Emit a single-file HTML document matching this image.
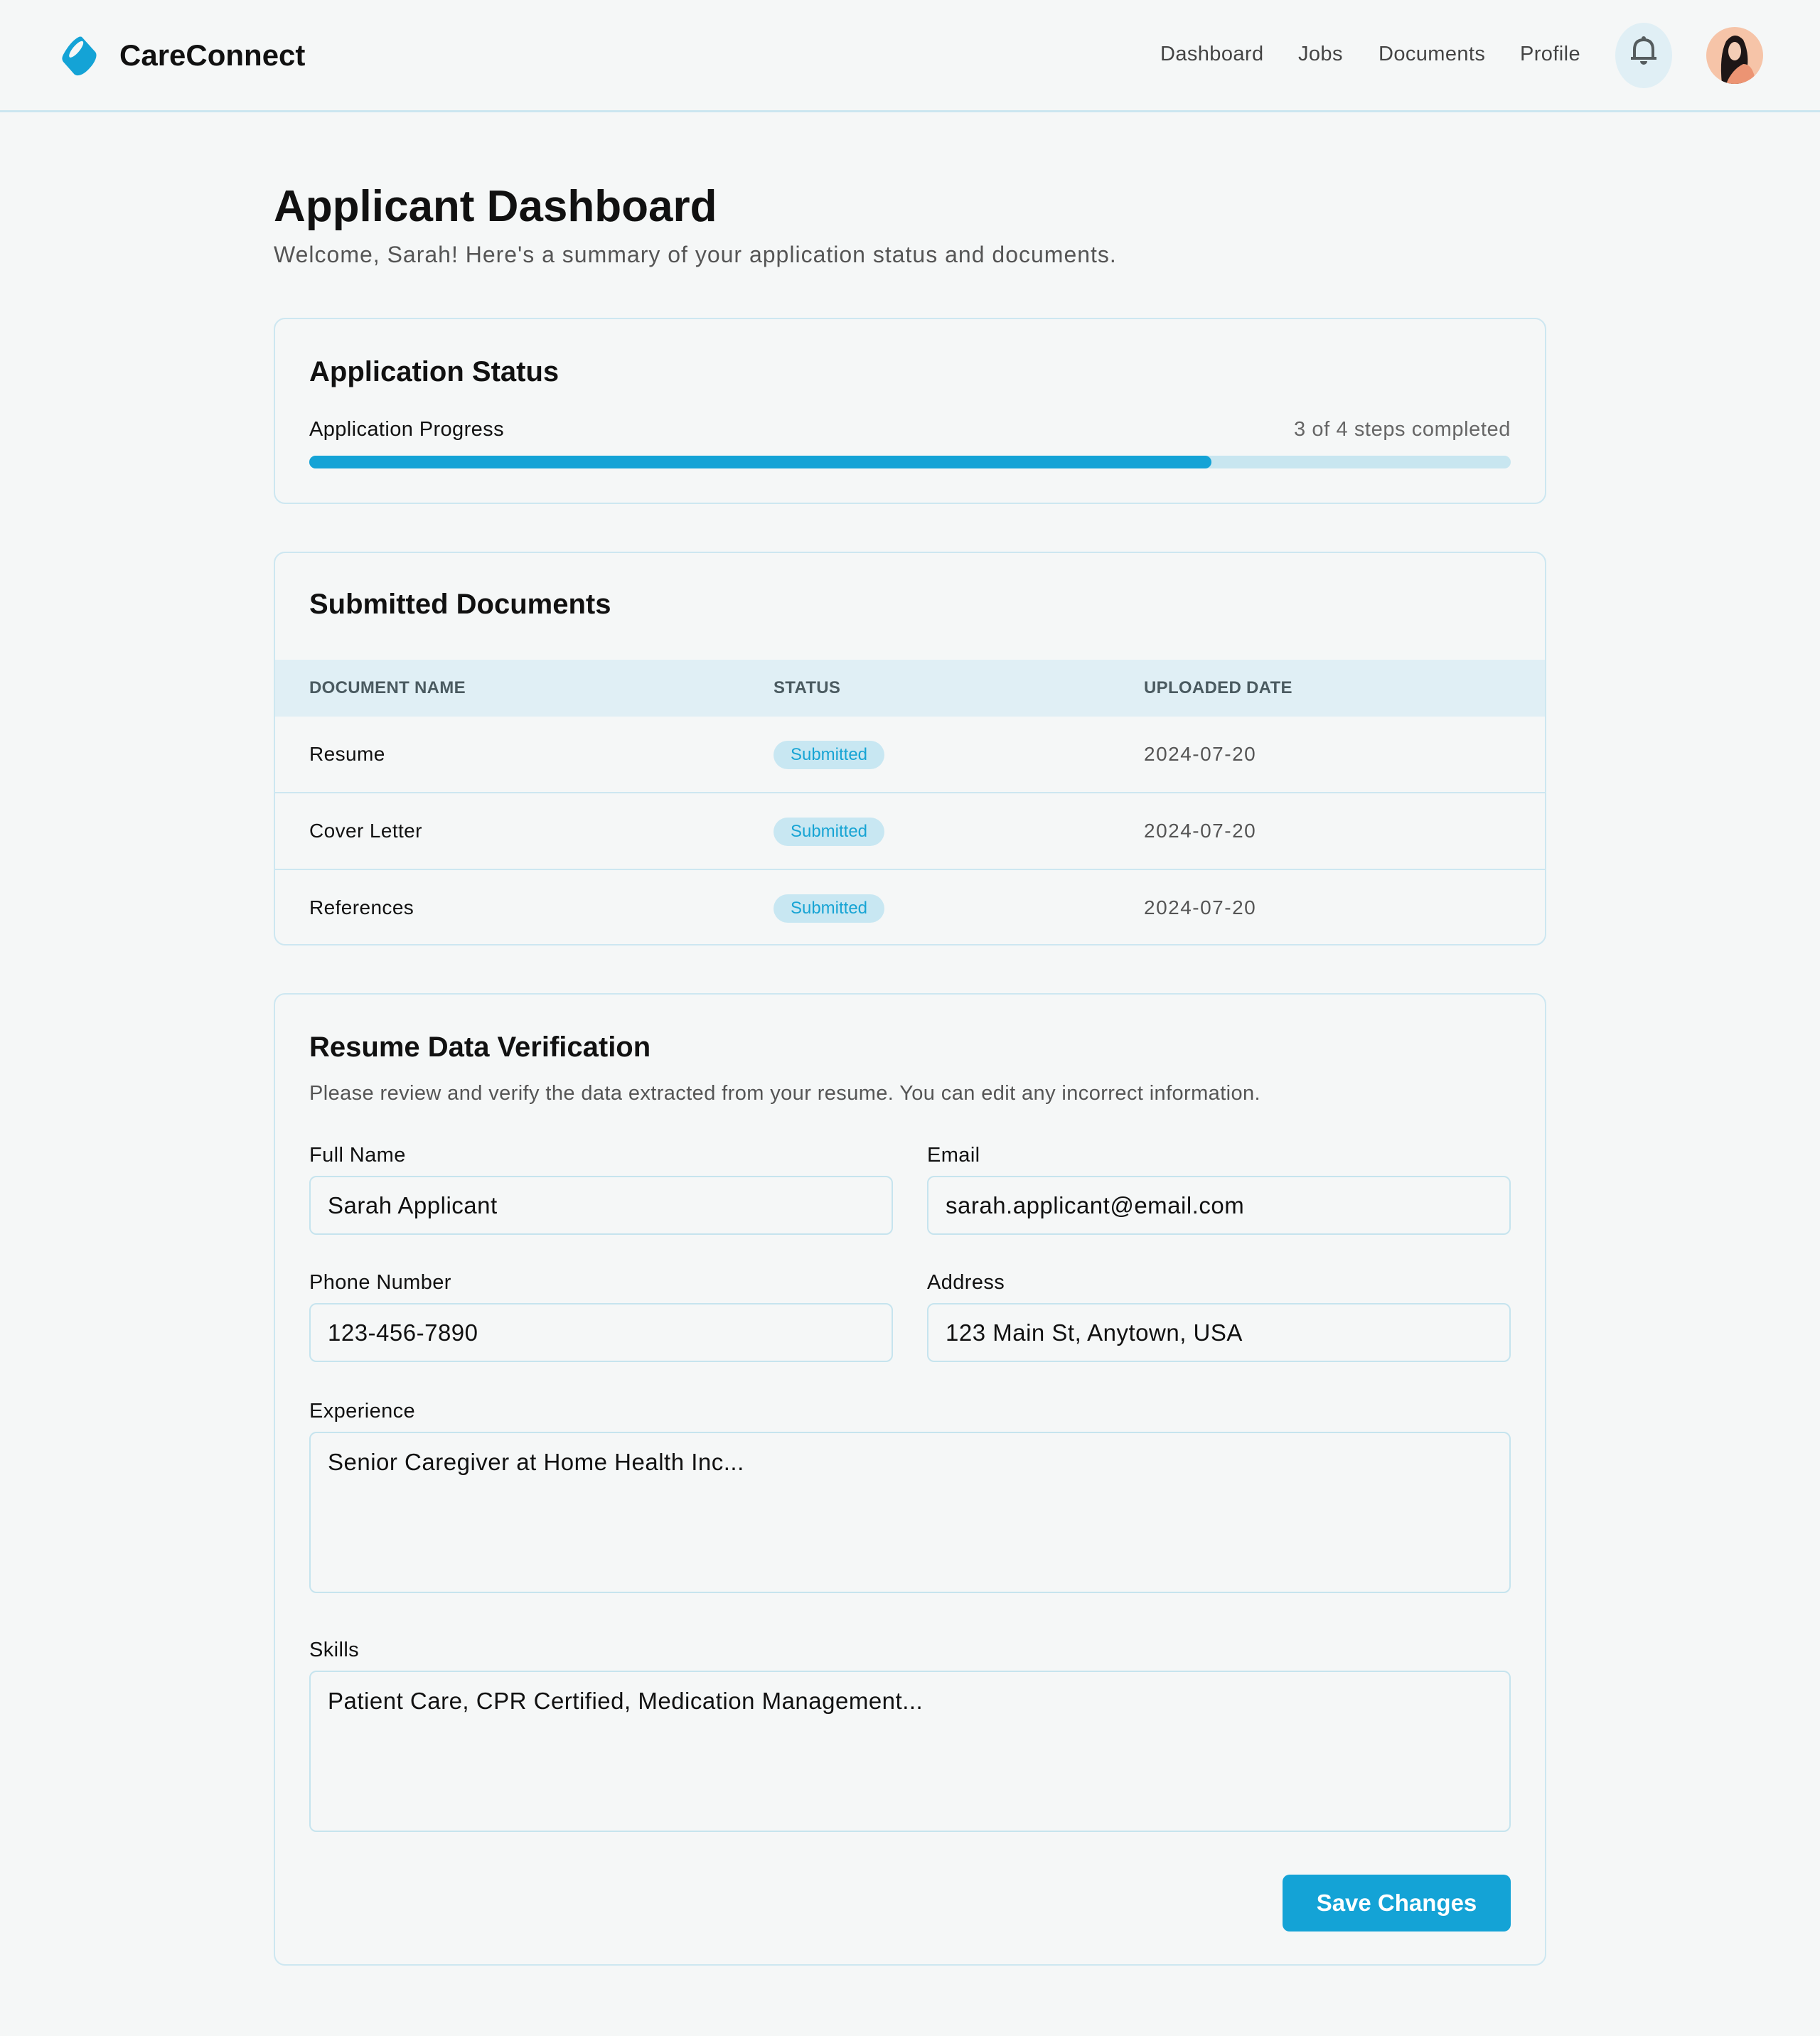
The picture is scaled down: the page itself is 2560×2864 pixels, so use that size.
<!DOCTYPE html>
<html><head><meta charset="utf-8"><style>
*{box-sizing:border-box;margin:0;padding:0}
body{width:2560px;height:2864px;background:#f5f7f7;font-family:"Liberation Sans",sans-serif;color:#111;position:relative;overflow:hidden}
.a{position:absolute;white-space:nowrap}
.hdr{position:absolute;left:0;top:0;width:2560px;height:158px;border-bottom:3px solid #cbe6f0}
.nav{font-size:29px;color:#444;top:60px;letter-spacing:0.4px}
.card{position:absolute;left:385px;width:1790px;border:2px solid #cde7f1;border-radius:16px}
.h2{font-size:40px;font-weight:bold}
.th{font-size:24px;font-weight:bold;color:#4a5a60;letter-spacing:0.3px}
.td{font-size:28px;color:#111;letter-spacing:0.4px}
.dt{font-size:28px;color:#555;letter-spacing:1.5px}
.badge{position:absolute;left:1088px;width:156px;height:40px;border-radius:20px;background:#c8e7f2;color:#17a4d4;font-size:24px;text-align:center;line-height:40px}
.lbl{font-size:29px;color:#111;letter-spacing:0.4px}
.inp{position:absolute;border:2px solid #c6e4ee;border-radius:10px;font-size:33px;padding-left:24px;color:#111;letter-spacing:0.5px}
</style></head><body>
<div class="hdr"></div>
<svg class="a" style="left:84px;top:50px" width="58" height="58" viewBox="0 0 56 60"><path d="M30 2 L50 24 Q54 30 46 42 Q34 58 24 58 Q20 58 18 55 L3 38 Q0 34 3 28 Q14 8 26 2 Q28 1 30 2Z" fill="#14a3d6"/><ellipse cx="22" cy="20" rx="5" ry="15" transform="rotate(40 22 20)" fill="#f5f7f7"/></svg>
<div class="a" style="left:168px;top:54px;font-size:42px;font-weight:bold">CareConnect</div>
<div class="a nav" style="left:1632px">Dashboard</div>
<div class="a nav" style="left:1826px">Jobs</div>
<div class="a nav" style="left:1939px">Documents</div>
<div class="a nav" style="left:2138px">Profile</div>
<div class="a" style="left:2272px;top:32px;width:80px;height:92px;border-radius:50%;background:#e0eff5"></div>
<svg class="a" style="left:2294px;top:50px" width="36" height="44" viewBox="0 0 36 44"><path d="M5 32 V20 Q5 6 18 6 Q31 6 31 20 V32" fill="none" stroke="#555c5e" stroke-width="4"/><rect x="0" y="30" width="36" height="4" fill="#555c5e"/><circle cx="18" cy="4" r="3" fill="#555c5e"/><path d="M13 36 h10 a5 5 0 0 1 -10 0z" fill="#555c5e"/></svg>
<svg class="a" style="left:2400px;top:38px" width="80" height="80" viewBox="0 0 80 80"><defs><clipPath id="c"><circle cx="40" cy="40" r="40"/></clipPath></defs><g clip-path="url(#c)"><rect width="80" height="80" fill="#f6c4a8"/><path d="M22 80 Q18 40 28 20 Q40 5 52 18 Q60 35 58 55 L50 80Z" fill="#1e1616"/><ellipse cx="40" cy="34" rx="9" ry="13" fill="#f3cdb6"/><path d="M28 80 Q36 60 52 52 Q64 52 68 70 L68 80Z" fill="#ec9473"/></g></svg>

<div class="a" style="left:385px;top:255px;font-size:62px;font-weight:bold">Applicant Dashboard</div>
<div class="a" style="left:385px;top:340px;font-size:32px;color:#555;letter-spacing:1px">Welcome, Sarah! Here's a summary of your application status and documents.</div>

<div class="card" style="top:447px;height:262px"></div>
<div class="a h2" style="left:435px;top:501px">Application Status</div>
<div class="a" style="left:435px;top:588px;font-size:29px;letter-spacing:0.4px">Application Progress</div>
<div class="a" style="right:435px;top:588px;font-size:29px;color:#666;letter-spacing:0.6px">3 of 4 steps completed</div>
<div class="a" style="left:435px;top:641px;width:1690px;height:18px;border-radius:9px;background:#c8e6f0"></div>
<div class="a" style="left:435px;top:641px;width:1269px;height:18px;border-radius:9px;background:#14a3d6"></div>

<div class="card" style="top:776px;height:554px;overflow:hidden">
<div style="position:absolute;left:0;top:150px;width:100%;height:80px;background:#e0eff5"></div>
<div style="position:absolute;left:0;top:336px;width:100%;height:2px;background:#cde7f1"></div>
<div style="position:absolute;left:0;top:444px;width:100%;height:2px;background:#cde7f1"></div>
</div>
<div class="a h2" style="left:435px;top:828px">Submitted Documents</div>
<div class="a th" style="left:435px;top:954px">DOCUMENT NAME</div>
<div class="a th" style="left:1088px;top:954px">STATUS</div>
<div class="a th" style="left:1609px;top:954px">UPLOADED DATE</div>
<div class="a td" style="left:435px;top:1045px">Resume</div>
<div class="badge" style="top:1042px">Submitted</div>
<div class="a dt" style="left:1609px;top:1045px">2024-07-20</div>
<div class="a td" style="left:435px;top:1153px">Cover Letter</div>
<div class="badge" style="top:1150px">Submitted</div>
<div class="a dt" style="left:1609px;top:1153px">2024-07-20</div>
<div class="a td" style="left:435px;top:1261px">References</div>
<div class="badge" style="top:1258px">Submitted</div>
<div class="a dt" style="left:1609px;top:1261px">2024-07-20</div>

<div class="card" style="top:1397px;height:1368px"></div>
<div class="a h2" style="left:435px;top:1451px">Resume Data Verification</div>
<div class="a" style="left:435px;top:1522px;font-size:29px;color:#555;letter-spacing:0.4px">Please review and verify the data extracted from your resume. You can edit any incorrect information.</div>
<div class="a lbl" style="left:435px;top:1609px">Full Name</div>
<div class="a lbl" style="left:1304px;top:1609px">Email</div>
<div class="inp" style="left:435px;top:1654px;width:821px;height:83px;line-height:79px">Sarah Applicant</div>
<div class="inp" style="left:1304px;top:1654px;width:821px;height:83px;line-height:79px">sarah.applicant@email.com</div>
<div class="a lbl" style="left:435px;top:1788px">Phone Number</div>
<div class="a lbl" style="left:1304px;top:1788px">Address</div>
<div class="inp" style="left:435px;top:1833px;width:821px;height:83px;line-height:79px">123-456-7890</div>
<div class="inp" style="left:1304px;top:1833px;width:821px;height:83px;line-height:79px">123 Main St, Anytown, USA</div>
<div class="a lbl" style="left:435px;top:1969px">Experience</div>
<div class="inp" style="left:435px;top:2014px;width:1690px;height:227px;padding-top:22px">Senior Caregiver at Home Health Inc...</div>
<div class="a lbl" style="left:435px;top:2305px">Skills</div>
<div class="inp" style="left:435px;top:2350px;width:1690px;height:227px;padding-top:22px">Patient Care, CPR Certified, Medication Management...</div>
<div class="a" style="left:1804px;top:2637px;width:321px;height:80px;border-radius:10px;background:#14a3d6;color:#fff;font-size:33px;font-weight:bold;text-align:center;line-height:80px">Save Changes</div>
</body></html>
